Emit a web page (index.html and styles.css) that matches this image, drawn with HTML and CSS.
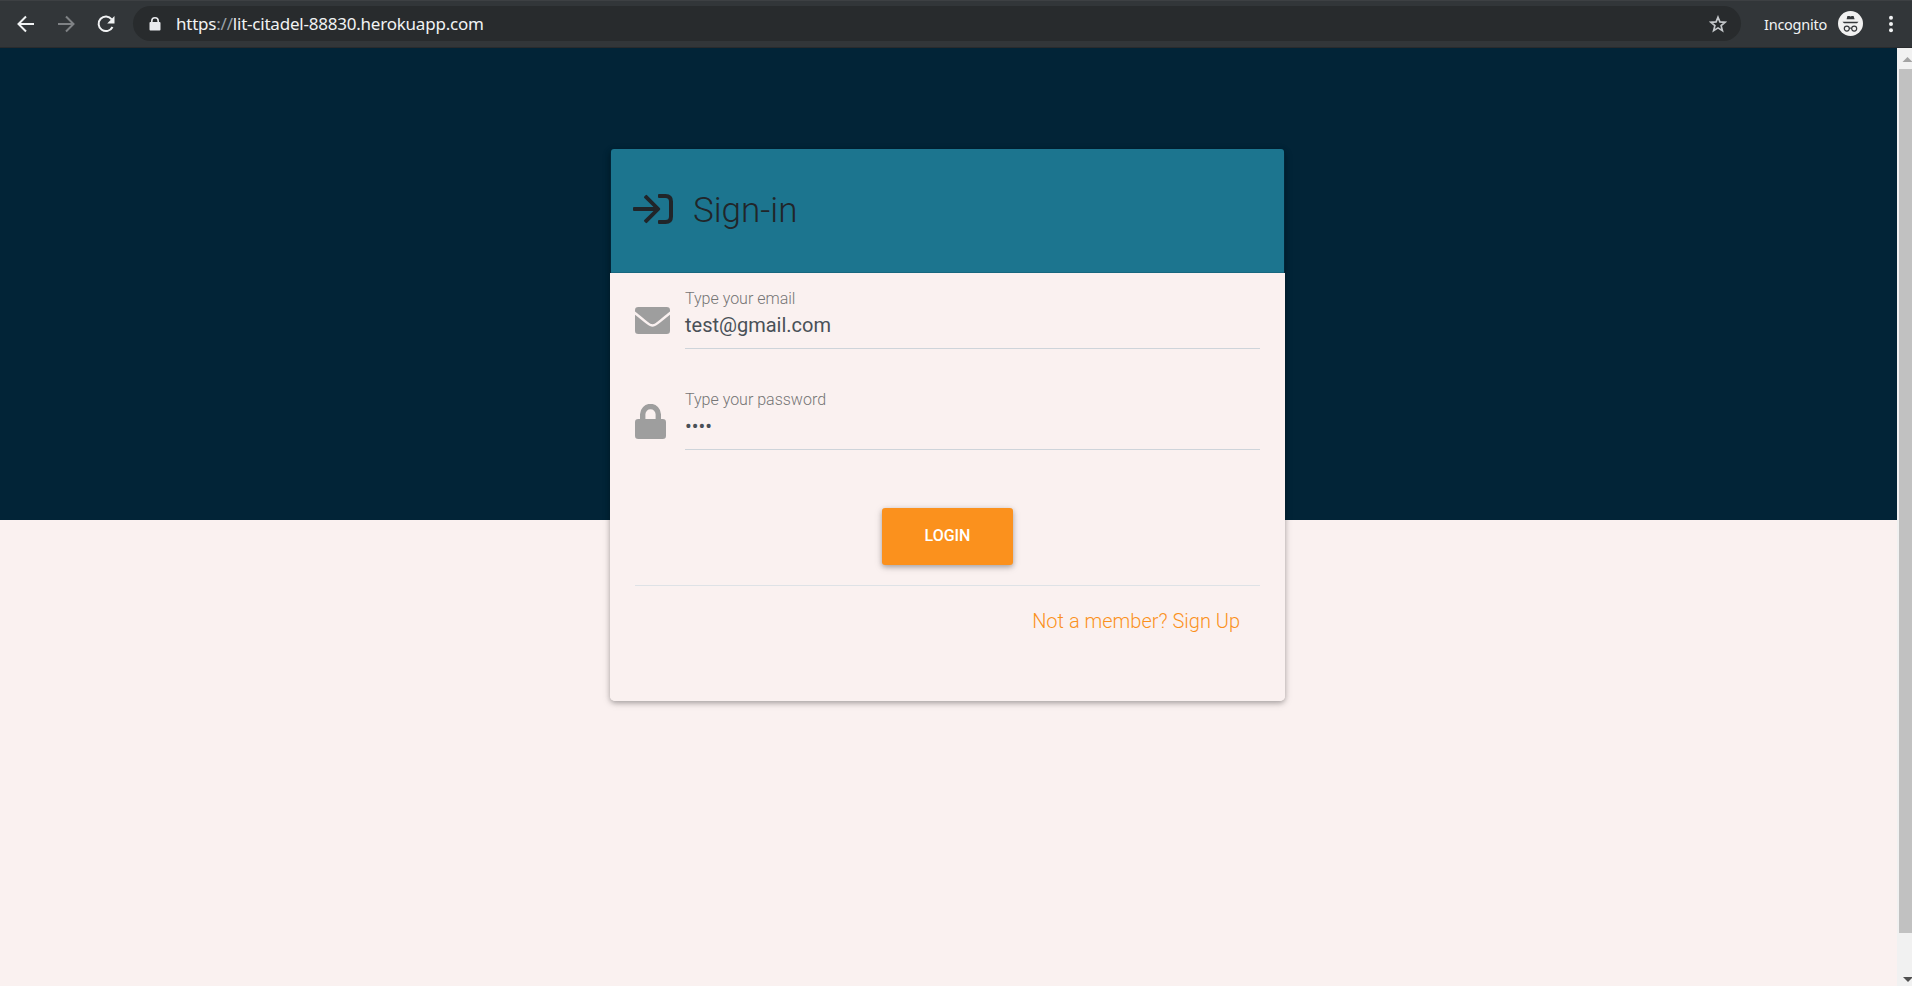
FILE: index.html
```html
<!DOCTYPE html>
<html lang="en">
<head>
<meta charset="utf-8">
<title>Sign-in</title>
<link rel="stylesheet" href="styles.css">
</head>
<body>
<header class="toolbar">
  <svg class="nav-icon" viewBox="0 0 18 18"><path d="M17 9H2M9 1.500 1.500 9 9 16.500"/></svg>
  <svg class="nav-icon muted" viewBox="0 0 18 18"><path d="M1 9h15M9 1.500 16.500 9 9 16.500"/></svg>
  <svg class="nav-icon" viewBox="0 0 18 18"><path d="M15.500 12A7.300 7.300 0 1 1 14.700 4.300"/><path class="solid" d="M17.500 1v7.500H10.200z"/></svg>
  <div class="address">
    <svg class="lock" viewBox="0 0 12 14"><path fill="#e8eaed" d="M2 5V4a4 4 0 0 1 8 0v1h.6q.9 0 .9.900v6.700q0 .9-.9.900H1.400q-.9 0-.9-.9V5.900Q.5 5 1.400 5zm1.600 0h4.800V4a2.400 2.400 0 0 0-4.800 0z"/></svg>
    <span class="url">https<i>://</i>lit-citadel-88830.herokuapp.com</span>
    <svg class="star" viewBox="0 0 18 18"><path d="m9 2.200 1.900 4.700 5.200.4-4 3.300 1.300 5L9 12.900l-4.400 2.700 1.300-5-4-3.300 5.200-.4z"/></svg>
  </div>
  <span class="mode">Incognito</span>
  <svg class="avatar" viewBox="0 0 25 25"><circle cx="12.500" cy="12.500" r="12.500" fill="#f1f1f1"/><path fill="#35383b" d="M9.400 5h2l1.200.5 1.200-.5h1.800l1 3.300h-8zM4.500 10.800h16l-1.500 1.400H6z"/><path fill="none" stroke="#35383b" stroke-width="1.200" d="M11.300 17.400q1.200-.8 2.400 0"/><g fill="none" stroke="#35383b" stroke-width="1.200"><circle cx="8.800" cy="17.600" r="2.500"/><circle cx="16.200" cy="17.600" r="2.500"/></g></svg>
  <svg class="dots" viewBox="0 0 4 18"><circle cx="2" cy="2.700" r="2"/><circle cx="2" cy="9" r="2"/><circle cx="2" cy="15.300" r="2"/></svg>
</header>
<div class="viewport">
  <main class="page">
    <section class="card">
      <div class="card-head">
        <svg class="signin" viewBox="0 0 40 30"><path d="M1 13h19.500L11.300 4q-.7-.8 0-1.500l1.300-1.300q.8-.7 1.500 0L26.800 14q1 1 0 2L14.100 28.800q-.7.700-1.500 0l-1.300-1.300q-.7-.7 0-1.500L20.500 17H1q-1 0-1-1v-2q0-1 1-1z"/><path d="M26 0h6.500Q40 0 40 7.500v15Q40 30 32.500 30H26q-1 0-1-1v-2q0-1 1-1h6.500q3.500 0 3.500-3.500v-15Q36 4 32.500 4H26q-1 0-1-1V1q0-1 1-1z"/></svg>
        <h1>Sign-in</h1>
      </div>
      <form class="card-body">
        <div class="field">
          <svg class="envelope" viewBox="0 0 35 27"><path d="M3.300 0h28.400Q35 0 35 3.300v1.300C29.500 9 26.500 11.500 22 15c-3.600 3-5.400 3-9 0C8.500 11.500 5.500 9 0 4.600V3.300Q0 0 3.300 0zM0 7.800c5 4 8.500 6.700 12 9.500 4.200 3.200 6.800 3.200 11 0 3.500-2.800 7-5.500 12-9.500v15.900q0 3.300-3.300 3.300H3.300Q0 27 0 23.700z"/></svg>
          <div class="control"><label>Type your email</label><span class="value">test@gmail.com</span></div>
        </div>
        <div class="field">
          <svg class="padlock" viewBox="0 0 31 35"><path d="M5 15v-4.700a10.500 10.500 0 0 1 21 0V15h1.700q3.300 0 3.300 3.300v13.400q0 3.300-3.300 3.300H3.300Q0 35 0 31.700V18.300Q0 15 3.300 15zm5.400 0h10.200v-4.700a5.100 5.100 0 0 0-10.200 0z"/></svg>
          <div class="control"><label>Type your password</label><span class="value">••••</span></div>
        </div>
        <button class="login" type="button">LOGIN</button>
        <div class="card-foot"><a>Not a member? Sign Up</a></div>
      </form>
    </section>
  </main>
  <aside class="scrollbar">
    <svg class="arrow" viewBox="0 0 15 21"><path fill="#a3a3a3" d="m5.500 14 5-5 5 5z"/></svg>
    <div class="thumb"></div>
    <svg class="arrow down" viewBox="0 0 15 21"><path fill="#505050" d="M6 12h10l-5 5z"/></svg>
  </aside>
</div>
</body>
</html>
```
FILE: styles.css
```css
* { box-sizing: border-box; }
body { margin: 0; height: 986px; display: flex; flex-direction: column; overflow: hidden; font-family: Roboto, sans-serif; }
svg { display: block; flex: none; }

.toolbar { height: 48px; flex: none; display: flex; align-items: center; padding: 0 19px 1px 17px; background: #323639; border-top: 1px solid #3d4043; border-bottom: 1px solid #292b2d; color: #f1f3f4; }
.nav-icon { width: 18px; height: 18px; margin-right: 22px; fill: none; stroke: #f1f3f4; stroke-width: 2; }
.nav-icon .solid { fill: #f1f3f4; stroke: none; }
.muted { stroke: #7f8285; }
.address { width: 1608px; height: 35px; margin-left: -4px; border-radius: 18px; background: #282b2d; display: flex; align-items: center; padding: 0 14px 0 16px; }
.lock { width: 12px; height: 14px; }
.url { margin-left: 15px; font-family: "Noto Sans", sans-serif; font-size: 17px; line-height: 24px; letter-spacing: -0.220px; white-space: nowrap; }
.url i { font-style: normal; color: #9aa0a6; }
.star { width: 18px; height: 18px; margin-left: auto; fill: none; stroke: #c5c8cb; stroke-width: 1.700; }
.mode { width: 62px; margin-left: 23px; font-family: "Noto Sans", sans-serif; font-size: 14.500px; letter-spacing: -0.250px; white-space: nowrap; }
.avatar { width: 25px; height: 25px; margin-left: 12px; }
.dots { width: 4px; height: 18px; margin-left: auto; fill: #f1f3f4; }

.viewport { flex: 1; display: flex; }
.page { flex: 1; padding-top: 101px; display: flex; justify-content: center; align-items: flex-start; background: linear-gradient(#022437 472px, #faf1f0 472px); }
.card { width: 675px; height: 552px; margin-right: 2px; border-radius: 5px; background: linear-gradient(transparent 124px, #faf1f0 124px); box-shadow: 0 2px 5px rgba(0,0,0,.26), 0 2px 10px rgba(0,0,0,.12); }
.card-head { height: 124px; margin: 0 1px; border-radius: 3px 3px 0 0; background: #1c758f; border-bottom: 1px solid #17677f; display: flex; align-items: center; padding: 0 22px; color: #212529; }
.signin { width: 40px; height: 30px; margin-top: -3px; fill: #212529; }
h1 { margin: 0 0 0 20px; font-size: 35px; line-height: 42px; font-weight: 300; }
.card-body { padding: 16px 25px 0; }
.field { height: 101px; display: flex; align-items: flex-start; }
.envelope { width: 35px; height: 27px; margin: 18px 15px 0 0; fill: #9e9e9e; }
.padlock { width: 31px; height: 35px; margin: 14px 19px 0 0; fill: #9e9e9e; }
.control { flex: 1; height: 60px; display: flex; flex-direction: column; border-bottom: 1px solid #ced4da; }
label { font-size: 16px; line-height: 19px; font-weight: 300; color: #757575; }
.value { font-size: 20px; line-height: 24px; margin-top: 5px; color: #495057; }
.login { display: block; width: 131px; height: 57px; margin: 17px auto 20px; padding: 0 0 2px; border: 0; border-radius: 3px; background: #fb911d; color: #fff; font: 500 16px/20px Roboto, sans-serif; box-shadow: 0 2px 5px rgba(0,0,0,.26), 0 2px 10px rgba(0,0,0,.12); }
.card-foot { border-top: 1px solid #dee2e6; padding: 23px 20px 0 0; text-align: right; }
.card-foot a { color: #fb911d; font-size: 20px; line-height: 24px; font-weight: 300; }

.scrollbar { width: 15px; flex: none; background: #f1f1f1; display: flex; flex-direction: column; }
.arrow { width: 15px; height: 21px; }
.thumb { height: 864px; margin-left: 2px; background: #c1c1c1; }
.down { margin-top: auto; }
```
